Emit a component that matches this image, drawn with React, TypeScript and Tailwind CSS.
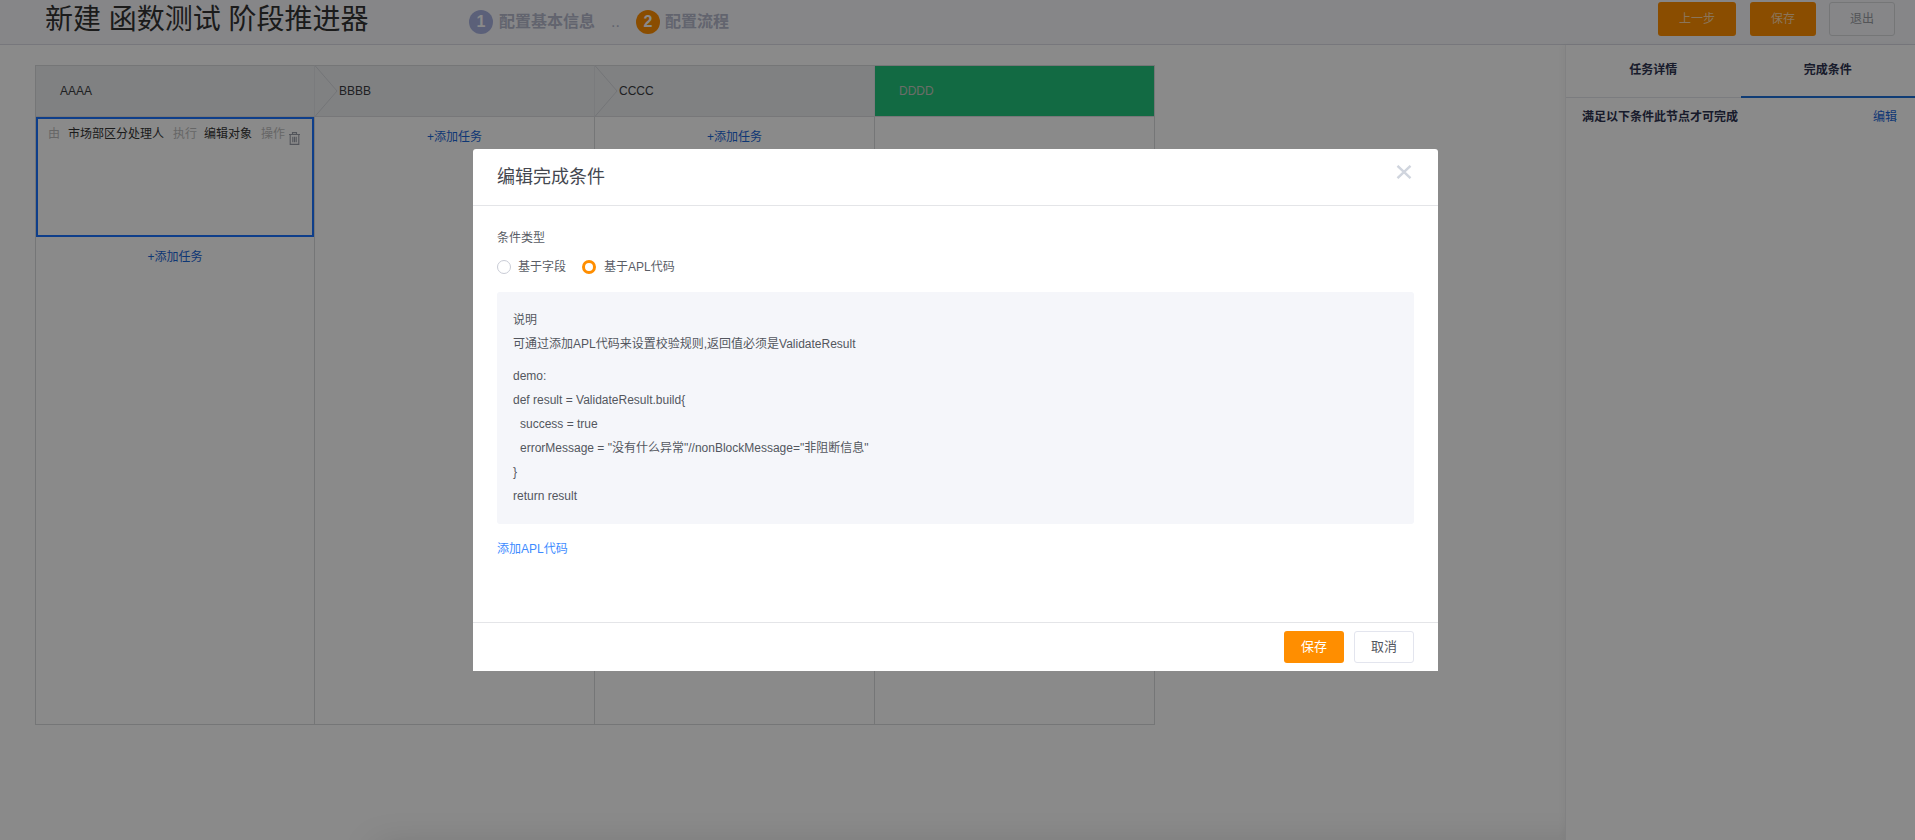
import React from "react";

const F = { fontFamily: '"Liberation Sans", "Noto Sans CJK SC", sans-serif' };

function Chevron() {
  return (
    <svg className="absolute top-[-1px] right-[-24px] z-10" width="24" height="52" viewBox="0 0 24 52" fill="none">
      <path d="M0.5 0 L23 26 L0.5 52" stroke="#d6d8dc" strokeWidth="1" fill="#eceef1" />
    </svg>
  );
}

function AddTask({ className = "" }: { className?: string }) {
  return <div className={`text-center text-[12px] leading-[18px] text-[#1a66d8] ${className}`}>+添加任务</div>;
}

function Column({ name, green, last, className = "", children }: { name: string; green?: boolean; last?: boolean; className?: string; children?: React.ReactNode }) {
  return (
    <div className={`flex shrink-0 flex-col ${className} ${last ? "" : "border-r border-[#d9dadd]"}`}>
      <div
        className={`relative flex h-[51px] shrink-0 items-center border-b border-[#dcdde0] pl-[24px] text-[12px] ${
          green ? "z-[15] bg-[#22c47c] text-[#c6c9c0]" : "bg-[#eceef1] text-[#3a3c40]"
        }`}
      >
        {name}
        {!green && !last && <Chevron />}
      </div>
      {children}
    </div>
  );
}

export default function App() {
  return (
    <div className="relative h-[840px] w-[1915px] overflow-hidden bg-white text-[12px]" style={F}>
      {/* Page header */}
      <header className="flex h-[45px] items-center border-b border-[#dcdde5] bg-[#f7f8fc]">
        <h1 className="ml-[45px] w-[424px] shrink-0 pb-[4px] text-[28px] font-normal leading-[40px] text-[#333] whitespace-nowrap">
          新建 函数测试 阶段推进器
        </h1>
        <div className="flex items-center">
          <span className="flex h-[24px] w-[24px] items-center justify-center rounded-full bg-[#a9b2e0] text-[16px] font-bold text-white">1</span>
          <span className="ml-[6px] text-[16px] font-bold text-[#b6b9cc]">配置基本信息</span>
          <span className="ml-[16px] w-[25px] text-[16px] text-[#b6b9cc]">..</span>
          <span className="flex h-[24px] w-[24px] items-center justify-center rounded-full bg-[#ff8e00] text-[16px] font-bold text-white">2</span>
          <span className="ml-[5px] text-[16px] font-bold text-[#b6b9cc]">配置流程</span>
        </div>
        <div className="ml-auto mr-[20px] flex items-center pb-[7px]">
          <button className="h-[34px] w-[78px] rounded-[3px] bg-[#ff8e00] text-[12px] text-[#ffd9a8]">上一步</button>
          <button className="ml-[14px] h-[34px] w-[66px] rounded-[3px] bg-[#ff8e00] text-[12px] text-[#ffd9a8]">保存</button>
          <button className="ml-[13px] h-[34px] w-[66px] rounded-[3px] border border-[#d9dadd] bg-[#f7f8fc] text-[12px] text-[#9a9da3]">退出</button>
        </div>
      </header>

      <div className="flex h-[795px]">
        {/* Canvas */}
        <main className="flex-1 pl-[35px] pt-[20px]">
          <div className="flex h-[660px] w-[1120px] border border-[#d9dadd]">
            <Column name="AAAA" className="w-[279px]">
              <div className="flex h-[120px] w-full flex-col border-2 border-[#1a73ff]">
                <div className="flex items-start pl-[10px] pt-[6px] leading-[18px]">
                  <span className="w-[20px] text-[#bdbdbd]">由</span>
                  <span className="w-[105px] text-[#333]">市场部区分处理人</span>
                  <span className="w-[31px] text-[#bdbdbd]">执行</span>
                  <span className="w-[57px] text-[#333]">编辑对象</span>
                  <span className="w-[28px] text-[#bdbdbd]">操作</span>
                  <svg className="mt-[7px]" width="11" height="13" viewBox="0 0 11 13" fill="none" stroke="#9a9da8" strokeWidth="1.1">
                    <path d="M0 2.5H11M3.5 2.5V0.6H7.5V2.5M1.2 2.5V12.4H9.8V2.5M3.8 4.8V10.2M5.5 4.8V10.2M7.2 4.8V10.2" />
                  </svg>
                </div>
              </div>
              <AddTask className="mt-[11px]" />
            </Column>
            <Column name="BBBB" className="w-[280px]"><AddTask className="mt-[11px]" /></Column>
            <Column name="CCCC" className="w-[280px]"><AddTask className="mt-[11px]" /></Column>
            <Column name="DDDD" green last className="w-[279px]" />
          </div>
        </main>

        {/* Right panel */}
        <aside className="relative z-[5] w-[350px] shrink-0 border-l border-[#efeff1] bg-white shadow-[-2px_0_6px_rgba(0,0,0,0.04)]">
          <div className="flex h-[53px] border-b border-[#e4e5ea]">
            <div className="flex w-[175px] items-center justify-center pb-[2px] font-bold text-[#2e3350]">任务详情</div>
            <div className="-mb-px flex w-[175px] items-center justify-center border-b-2 border-[#1d6fd8] pb-[2px] font-bold text-[#2e3350]">完成条件</div>
          </div>
          <div className="flex items-center justify-between pl-[16px] pr-[18px] pt-[10px] leading-[18px]">
            <span className="font-bold text-[#2e3350]">满足以下条件此节点才可完成</span>
            <span className="text-[#1a66d8]">编辑</span>
          </div>
        </aside>
      </div>

      {/* Element peeking in from below, only its shadow shows */}
      <div className="absolute left-[375px] right-[300px] top-[848px] h-[20px] shadow-[0_0_36px_rgba(0,0,0,0.2)]" />

      {/* Mask */}
      <div className="absolute inset-0 z-20 bg-black/[0.46] pl-[473px] pt-[149px]">
        <div className="flex h-[522px] w-[965px] flex-col rounded-t-[3px] bg-white">
          <div className="flex h-[57px] shrink-0 items-center justify-between border-b border-[#e4e5e8] pl-[24px] pr-[26px]">
            <span className="text-[18px] text-[#44474f]">编辑完成条件</span>
            <svg className="mb-[11px]" width="16" height="14" viewBox="0 0 16 14" fill="none" stroke="#d0d5de" strokeWidth="2.4">
              <path d="M1.5 0.8L14.5 13.2M14.5 0.8L1.5 13.2" />
            </svg>
          </div>

          <div className="flex-1 px-[24px] pt-[23px]">
            <div className="leading-[18px] text-[#5a5d66]">条件类型</div>
            <div className="mt-[11px] flex h-[18px] items-center text-[#5a5d66]">
              <span className="h-[14px] w-[14px] rounded-full border border-[#c9ccd6] bg-white" />
              <span className="ml-[7px] w-[64px]">基于字段</span>
              <span className="h-[14px] w-[14px] rounded-full border-[3.5px] border-[#ff8e00] bg-white" />
              <span className="ml-[8px]">基于APL代码</span>
            </div>

            <div className="mt-[16px] h-[232px] w-[917px] rounded-[3px] bg-[#f5f6fa] px-[16px] pt-[16px] text-[#53565e]">
              <div className="leading-[24px]">说明</div>
              <div className="leading-[25px]">可通过添加APL代码来设置校验规则,返回值必须是ValidateResult</div>
              <div className="mt-[7px] leading-[24px]">demo:</div>
              <div className="leading-[24px]">def result = ValidateResult.build{"{"}</div>
              <div className="pl-[7px] leading-[24px]">success = true</div>
              <div className="pl-[7px] leading-[24px]">errorMessage = "没有什么异常"//nonBlockMessage="非阻断信息"</div>
              <div className="leading-[24px]">{"}"}</div>
              <div className="leading-[24px]">return result</div>
            </div>

            <div className="mt-[16px] leading-[18px] text-[#3d8bff]">添加APL代码</div>
          </div>

          <div className="flex h-[49px] shrink-0 items-start justify-end gap-[10px] border-t border-[#e4e5e8] pr-[24px] pt-[8px]">
            <button className="h-[32px] w-[60px] rounded-[3px] bg-[#ff8e00] text-[13px] text-white">保存</button>
            <button className="h-[32px] w-[60px] rounded-[3px] border border-[#e3e5ee] bg-white text-[13px] text-[#53565e]">取消</button>
          </div>
        </div>
      </div>
    </div>
  );
}
